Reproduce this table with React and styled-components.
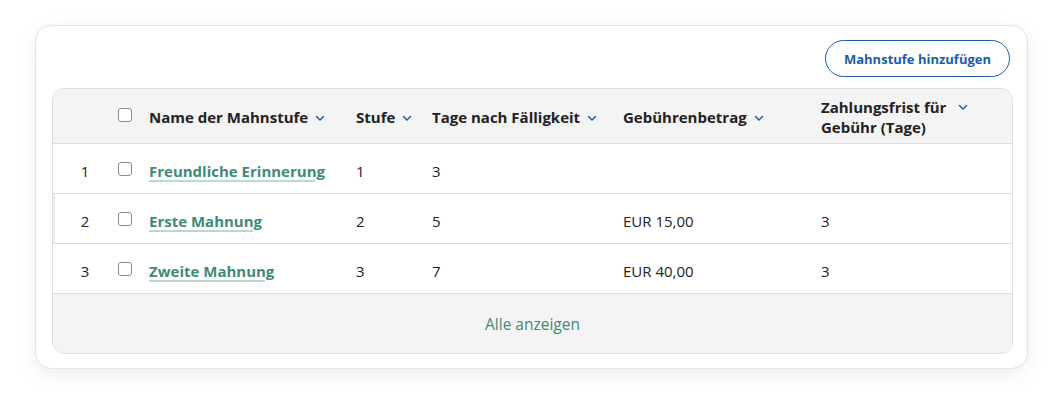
import React from 'react'
import styled, { createGlobalStyle } from 'styled-components'

const GlobalStyle = createGlobalStyle`
  body {
    margin: 0;
    background: #ffffff;
    font-family: "Open Sans", "Noto Sans", sans-serif;
    color: #222222;
  }
`

const Page = styled.div`
  padding: 25px 36px 40px 35px;
`

const Card = styled.div`
  width: 993px;
  box-sizing: border-box;
  background: #fff;
  border: 1px solid #e3e3e3;
  border-radius: 16px;
  box-shadow: 0 6px 22px rgba(0, 0, 0, 0.07);
  padding: 14px 14px 14px 16px;
`

const Toolbar = styled.div`
  display: flex;
  justify-content: flex-end;
  margin-bottom: 11px;
`

const OutlineButton = styled.button`
  height: 37px;
  padding: 0 18px;
  border: 1px solid #1c5ea8;
  border-radius: 19px;
  background: #fff;
  color: #1c5ea8;
  font-family: "Open Sans", sans-serif;
  font-size: 13px;
  font-weight: 700;
  cursor: pointer;
  margin-right: 3px;
`

const Table = styled.div`
  border: 1px solid #dedede;
  border-radius: 12px;
  overflow: hidden;
`

const Row = styled.div`
  display: grid;
  grid-template-columns: 64px 32px 207px 76px 191px 198px 1fr;
  align-items: center;
  box-sizing: border-box;
  height: ${p => (p.head ? 55 : 50)}px;
  padding-top: ${p => (p.head ? 1 : 4)}px;
  background: ${p => (p.head ? '#f4f4f4' : '#fff')};
  border-bottom: 1px solid #dcdcdc;
  font-size: 15px;
  box-shadow: ${p => (p.marked ? 'inset 2px 0 0 #ececec' : 'none')};
`

const Num = styled.div`
  text-align: center;
`

const Cell = styled.div`
  display: flex;
  align-items: ${p => (p.top ? 'flex-start' : 'center')};
`

const HeadLabel = styled.span`
  font-weight: 700;
  line-height: 20px;
  width: ${p => (p.w ? p.w + 'px' : 'auto')};
`

const Chevron = styled.svg`
  width: 10px;
  height: 10px;
  margin-left: ${p => p.gap || 7}px;
  margin-top: ${p => (p.top ? 5 : 2)}px;
  flex-shrink: 0;
`

const Box = styled.span`
  display: inline-block;
  width: 12px;
  height: 12px;
  border: 1px solid #8c8c8c;
  border-radius: 3px;
  background: #fff;
  margin-left: 1px;
  margin-top: -4px;
`

const NameLink = styled.a`
  color: #3f8a77;
  font-weight: 700;
  text-decoration: underline;
  text-decoration-color: #b9d8ce;
  text-decoration-thickness: 2px;
  text-underline-offset: 3px;
  cursor: pointer;
`

const Footer = styled.div`
  height: 59px;
  background: #f4f4f4;
  display: flex;
  align-items: center;
  justify-content: center;
  font-size: 15.5px;
  color: #3f8a77;
`

const Down = ({ gap, top }) => (
  <Chevron viewBox="0 0 10 10" gap={gap} top={top}>
    <path d="M1.5 3.5 L5 7 L8.5 3.5" fill="none" stroke="#1c5ea8" strokeWidth="1.5" strokeLinecap="round" strokeLinejoin="round" />
  </Chevron>
)

const rows = [
  { n: 1, name: 'Freundliche Erinnerung', stufe: '1', tage: '3', fee: '', frist: '' },
  { n: 2, name: 'Erste Mahnung', stufe: '2', tage: '5', fee: 'EUR 15,00', frist: '3', marked: true },
  { n: 3, name: 'Zweite Mahnung', stufe: '3', tage: '7', fee: 'EUR 40,00', frist: '3' },
]

export default function App() {
  return (
    <Page>
      <GlobalStyle />
      <Card>
        <Toolbar>
          <OutlineButton>Mahnstufe hinzufügen</OutlineButton>
        </Toolbar>
        <Table>
          <Row head>
            <div />
            <Cell><Box /></Cell>
            <Cell><HeadLabel>Name der Mahnstufe</HeadLabel><Down /></Cell>
            <Cell><HeadLabel>Stufe</HeadLabel><Down /></Cell>
            <Cell><HeadLabel>Tage nach Fälligkeit</HeadLabel><Down /></Cell>
            <Cell><HeadLabel>Gebührenbetrag</HeadLabel><Down /></Cell>
            <Cell top><HeadLabel w={132}>Zahlungsfrist für Gebühr (Tage)</HeadLabel><Down gap={5} top /></Cell>
          </Row>
          {rows.map(r => (
            <Row key={r.n} marked={r.marked}>
              <Num>{r.n}</Num>
              <Cell><Box /></Cell>
              <Cell><NameLink>{r.name}</NameLink></Cell>
              <div>{r.stufe}</div>
              <div>{r.tage}</div>
              <div>{r.fee}</div>
              <div>{r.frist}</div>
            </Row>
          ))}
          <Footer>Alle anzeigen</Footer>
        </Table>
      </Card>
    </Page>
  )
}
